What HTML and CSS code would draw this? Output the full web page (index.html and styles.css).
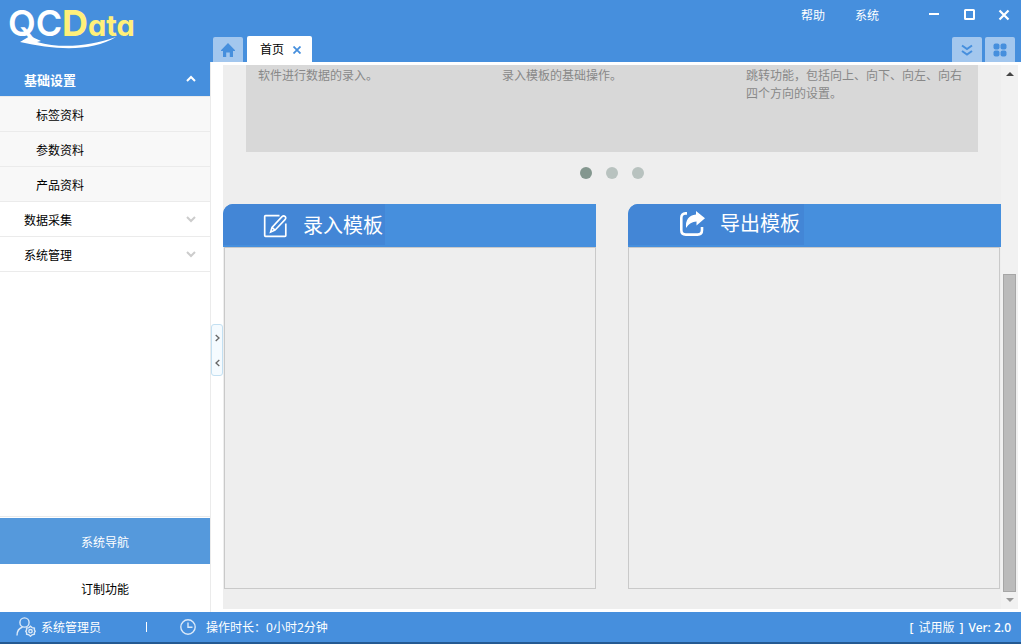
FILE: index.html
```html
<!DOCTYPE html>
<html lang="zh-CN">
<head>
<meta charset="utf-8">
<title>QCData</title>
<link rel="stylesheet" href="styles.css">
</head>
<body>
<header class="topbar">
  <svg class="logo" width="140" height="54" viewBox="0 0 140 54" role="img" aria-label="QCData">
    <text class="logo-qc" x="8" y="36">QC</text>
    <text class="logo-data" x="62" y="36"><tspan class="logo-cap">D</tspan>ata</text>
    <path d="M20 42 L30 36 L41 41 L37 42 C62 49 90 46 116 37 C92 52 55 50 20 42Z" fill="#fff"/>
  </svg>
  <nav class="tabs">
    <button class="tab-square" aria-label="主页"><svg width="14" height="14" viewBox="0 0 14 14"><path d="M7 0 L14 7.2 V8 H12 V14 H8.8 V9.5 H5.2 V14 H2 V8 H0 V7.2Z" fill="#468fdd"/></svg></button>
    <div class="tab-active"><span>首页</span><button class="tab-close" aria-label="关闭标签"><svg width="8" height="8" viewBox="0 0 8 8"><path d="M.5 .5 L7.5 7.5 M7.5 .5 L.5 7.5" stroke="#468fdd" stroke-width="1.8"/></svg></button></div>
  </nav>
  <div class="top-right">
    <div class="window-bar">
      <button class="menu-link">帮助</button>
      <button class="menu-link">系统</button>
      <div class="window-buttons">
        <button aria-label="最小化"><svg width="12" height="12" viewBox="0 0 12 12"><path d="M1 5 H11" stroke="#fff" stroke-width="2"/></svg></button>
        <button aria-label="最大化"><svg width="12" height="12" viewBox="0 0 12 12"><rect x="2" y="1" width="9" height="9" rx=".5" fill="none" stroke="#fff" stroke-width="2"/></svg></button>
        <button aria-label="关闭"><svg width="12" height="12" viewBox="0 0 12 12"><path d="M1.5 1.5 L10.5 10.5 M10.5 1.5 L1.5 10.5" stroke="#fff" stroke-width="2.2"/></svg></button>
      </div>
    </div>
    <div class="tab-tools">
      <button class="tab-square" aria-label="更多标签"><svg width="12" height="12" viewBox="0 0 12 12"><path d="M1 1.5 L6 5 L11 1.5 M1 7 L6 10.5 L11 7" fill="none" stroke="#468fdd" stroke-width="2"/></svg></button>
      <button class="tab-square" aria-label="全部功能"><svg width="14" height="14" viewBox="0 0 14 14" fill="#468fdd"><rect x="0.5" y="0.5" width="6" height="6" rx="2"/><rect x="7.5" y="0.5" width="6" height="6" rx="2"/><rect x="0.5" y="7.5" width="6" height="6" rx="2"/><rect x="7.5" y="7.5" width="6" height="6" rx="2"/></svg></button>
    </div>
  </div>
</header>

<div class="workspace">
  <aside class="sidebar">
    <nav class="side-menu">
      <button class="group group-open"><span>基础设置</span><svg width="10" height="7" viewBox="0 0 10 7"><path d="M1 6 L5 2 L9 6" fill="none" stroke="#fff" stroke-width="2"/></svg></button>
      <a class="sub" href="#">标签资料</a>
      <a class="sub" href="#">参数资料</a>
      <a class="sub" href="#">产品资料</a>
      <button class="group"><span>数据采集</span><svg width="10" height="7" viewBox="0 0 10 7"><path d="M1 1 L5 5 L9 1" fill="none" stroke="#ccc" stroke-width="2"/></svg></button>
      <button class="group"><span>系统管理</span><svg width="10" height="7" viewBox="0 0 10 7"><path d="M1 1 L5 5 L9 1" fill="none" stroke="#ccc" stroke-width="2"/></svg></button>
    </nav>
    <div class="side-bottom">
      <button class="mode mode-active">系统导航</button>
      <button class="mode">订制功能</button>
    </div>
  </aside>

  <div class="splitter">
    <button class="splitter-handle" aria-label="折叠侧栏">
      <svg width="5" height="8" viewBox="0 0 5 8"><path d="M.7 1 L4 4 L.7 7" fill="none" stroke="#666" stroke-width="1.3"/></svg>
      <svg width="5" height="8" viewBox="0 0 5 8"><path d="M4.3 1 L1 4 L4.3 7" fill="none" stroke="#666" stroke-width="1.3"/></svg>
    </button>
  </div>

  <main class="page">
    <div class="content">
      <section class="intro">
        <p>软件进行数据的录入。</p>
        <p>录入模板的基础操作。</p>
        <p>跳转功能，包括向上、向下、向左、向右四个方向的设置。</p>
      </section>
      <div class="dots">
        <button class="dot dot-on" aria-label="第1页"></button>
        <button class="dot" aria-label="第2页"></button>
        <button class="dot" aria-label="第3页"></button>
      </div>
      <div class="panels">
        <section class="panel">
          <div class="panel-head">
            <h2 class="panel-title panel-title-import">
              <svg width="24" height="24" viewBox="0 0 24 24" fill="none" stroke="#fff"><path d="M16.5 1.7 H2.5 Q1.7 1.7 1.7 2.5 V21.5 Q1.7 22.3 2.5 22.3 H22 Q22.8 22.3 22.8 21.5 V9.5" stroke-width="1.7"/><path d="M19 2.6 Q20.6 1 22.2 2.6 Q23.4 4.2 22 5.6 L12 16.2 L7.6 18 L9 13.4Z M9 13.4 L12 16.2" stroke-width="1.6"/></svg>
              <span>录入模板</span>
            </h2>
          </div>
          <div class="panel-body panel-body-left"></div>
        </section>
        <section class="panel">
          <div class="panel-head">
            <h2 class="panel-title panel-title-export">
              <svg width="26" height="26" viewBox="0 0 26 26"><path d="M8 2.4 H6.5 Q2.3 2.4 2.3 7 V19 Q2.3 23.6 6.8 23.6 H18.5 Q23 23.6 23 19 V16" fill="none" stroke="#fff" stroke-width="2.6"/><path d="M17 0 L26 7.2 L17.5 14.5 V10.5 Q11 10.5 7 17 Q6 5 17 3.6Z" fill="#fff"/></svg>
              <span>导出模板</span>
            </h2>
          </div>
          <div class="panel-body panel-body-right"></div>
        </section>
      </div>
    </div>
    <div class="scrollbar">
      <svg width="8" height="4" viewBox="0 0 8 4"><path d="M0 4 L4 0 L8 4Z" fill="#444"/></svg>
      <div class="scroll-thumb"></div>
      <svg width="8" height="4" viewBox="0 0 8 4"><path d="M0 0 L4 4 L8 0Z" fill="#999"/></svg>
    </div>
  </main>
</div>

<footer class="status">
  <svg width="20" height="20" viewBox="0 0 20 20" fill="none" stroke="#dbe9f8" stroke-width="1.4"><circle cx="8.5" cy="5.5" r="4.6"/><path d="M1 18.5 Q1 12 6.5 10"/><path d="M14.5 9.2 L16 10.6 L18.4 11 V13 L19.2 14.2 L18.4 15.6 V17.2 L16 17.8 L14.5 19.2 L13 17.8 L10.6 17.2 V15.6 L9.8 14.2 L10.6 13 V11 L13 10.6Z"/><circle cx="14.5" cy="14.2" r="1.7"/></svg>
  <span class="user">系统管理员</span>
  <span class="divider"></span>
  <svg width="16" height="16" viewBox="0 0 16 16" fill="none" stroke="#dbe9f8" stroke-width="1.4"><circle cx="8" cy="8" r="7.2"/><path d="M8 3.5 V8.3 H12.5"/></svg>
  <span class="elapsed">操作时长：0小时2分钟</span>
  <span class="version"><span>[</span><span class="edition">试用版</span><span>]</span><span>Ver: 2.0</span></span>
</footer>
</body>
</html>
```

FILE: styles.css
```css
* { box-sizing: border-box; }

body {
  margin: 0;
  height: 100vh;
  display: flex;
  flex-direction: column;
  font: 12px/18px "Noto Sans", "Noto Sans CJK SC", sans-serif;
  color: #000;
  background: #fff;
  overflow: hidden;
}

button {
  margin: 0;
  padding: 0;
  border: 0;
  background: none;
  font: inherit;
  color: inherit;
}

svg { display: block; flex: none; }

/* Top bar */
.topbar {
  display: flex;
  height: 62px;
  flex: none;
  background: #468fdd;
  color: #fff;
}
.logo { margin-right: 73px; }
.logo-qc,
.logo-data { font-family: Inter, sans-serif; font-weight: 600; font-feature-settings: "cv11"; }
.logo-qc { fill: #fff; font-size: 36px; }
.logo-data { fill: #fff07a; font-size: 29px; font-weight: 700; }
.logo-cap { font-size: 36px; }

.tabs { display: flex; align-items: flex-end; gap: 4px; }
.tab-square {
  width: 30px;
  height: 25px;
  display: flex;
  align-items: center;
  justify-content: center;
  background: #a3c7ee;
  border-radius: 2px 2px 0 0;
}
.tab-active {
  height: 26px;
  display: flex;
  align-items: center;
  gap: 9px;
  padding: 2px 11px 0 13px;
  background: #fff;
  color: #000;
  border-radius: 2px 2px 0 0;
}

.top-right {
  margin-left: auto;
  display: flex;
  flex-direction: column;
  justify-content: space-between;
  align-items: flex-end;
}
.window-bar { display: flex; align-items: center; gap: 30px; padding: 7px 11px 0 0; }
.window-buttons { display: flex; gap: 23px; margin: -2px 0 0 19px; }
.tab-tools { display: flex; gap: 3px; padding-right: 6px; }

/* Sidebar */
.workspace { flex: 1; display: flex; min-height: 0; }
.sidebar {
  width: 211px;
  flex: none;
  display: flex;
  flex-direction: column;
  justify-content: space-between;
  border-right: 1px solid #ebebeb;
}
.side-menu,
.side-bottom { display: flex; flex-direction: column; }
.group {
  height: 35px;
  display: flex;
  align-items: center;
  justify-content: space-between;
  padding: 3px 14px 0 24px;
  border-bottom: 1px solid #ebebeb;
}
.group svg { margin-bottom: 3px; }
.group-open {
  padding-top: 2px;
  background: #468fdd;
  color: #fff;
  font-size: 13px;
  font-weight: 700;
}
.sub {
  height: 35px;
  padding: 10px 0 0 36px;
  background: #f8f8f8;
  border-bottom: 1px solid #ebebeb;
  color: #000;
  text-decoration: none;
}
.side-bottom { border-top: 1px solid #ebebeb; padding-top: 1px; }
.mode { height: 48px; padding-top: 4px; }
.mode-active { height: 46px; background: #5599dc; color: #fff; }

/* Splitter */
.splitter { width: 12px; flex: none; display: flex; align-items: center; }
.splitter-handle {
  width: 12px;
  height: 52px;
  margin-top: 26px;
  display: flex;
  flex-direction: column;
  align-items: center;
  justify-content: center;
  gap: 17px;
  background: #f5fbff;
  border: 1px solid #c3e0f2;
  border-radius: 3px;
}

/* Page */
.page { flex: 1; display: flex; min-width: 0; margin: 3px 3px 3px 0; background: #eee; }
.content { flex: 1; min-width: 0; display: flex; flex-direction: column; }
.intro {
  flex: none;
  height: 87px;
  margin: 0 23px;
  padding: 2px 12px 0;
  display: grid;
  grid-template-columns: repeat(3, 1fr);
  gap: 24px;
  background: #d8d8d8;
  color: #888;
}
.intro p { margin: 0; }
.dots { display: flex; justify-content: center; gap: 14px; margin: 15px 0 25px; }
.dot { width: 12px; height: 12px; border-radius: 50%; background: #b8c2bf; }
.dot-on { background: #84978f; }

.panels { flex: 1; display: grid; grid-template-columns: 1fr 1fr; gap: 32px; margin-bottom: 20px; }
.panel { display: flex; flex-direction: column; }
.panel-head { height: 43px; background: #468fdd; border-radius: 10px 0 0 0; overflow: hidden; }
.panel-title {
  display: flex;
  align-items: center;
  width: fit-content;
  height: 41px;
  margin: 0;
  gap: 16px;
  background: #4386d6;
  color: #fff;
  font-size: 20px;
  line-height: 24px;
  font-weight: 400;
}
.panel-title-import { padding: 3px 2px 0 40px; }
.panel-title-export { padding: 0 4px 2px 51px; gap: 15px; }
.panel-body { flex: 1; border: 1px solid #c9c9c9; }
.panel-body-left { margin-left: 1px; }
.panel-body-right { margin-right: 1px; }

.scrollbar {
  width: 17px;
  flex: none;
  display: flex;
  flex-direction: column;
  align-items: center;
  justify-content: space-between;
  padding: 7px 2px 7px 2px;
  background: #f1f1f1;
}
.scroll-thumb {
  width: 13px;
  height: 60%;
  margin: auto 0 6px;
  background: #bbb;
  border: 1px solid #a6a6a6;
}

/* Status bar */
.status {
  height: 32px;
  flex: none;
  display: flex;
  align-items: center;
  padding: 0 10px 0 16px;
  background: #468fdd;
  border-bottom: 2px solid #245a92;
  color: #fff;
}
.user,
.elapsed,
.version { padding-top: 2px; }
.user { margin-left: 5px; }
.divider { width: 1px; height: 10px; margin: 0 33px 0 45px; background: #fff; }
.elapsed { margin-left: 10px; }
.version { margin-left: auto; display: flex; gap: 5px; font-weight: 500; }
.edition { font-weight: 400; }
```
